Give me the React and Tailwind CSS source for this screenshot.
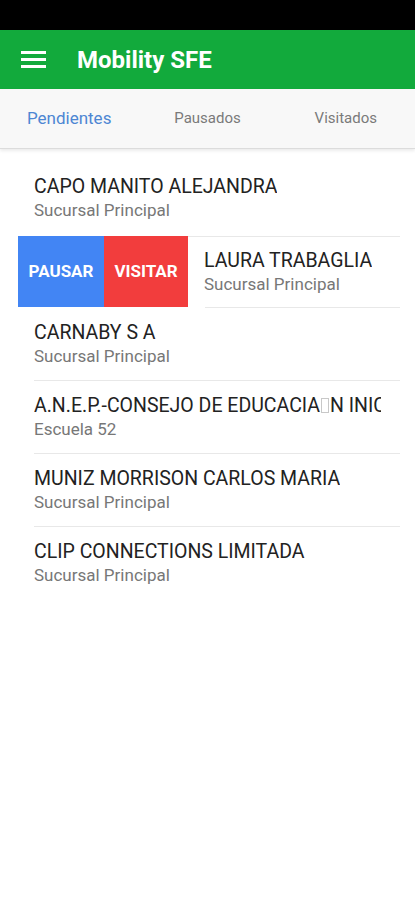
import React from 'react';

const clients = [
  { name: 'CAPO MANITO ALEJANDRA', branch: 'Sucursal Principal' },
  { name: 'LAURA TRABAGLIA', branch: 'Sucursal Principal', swiped: true },
  { name: 'CARNABY S A', branch: 'Sucursal Principal' },
  { name: 'A.N.E.P.-CONSEJO DE EDUCACIA', tail: 'N INICIAL Y PRIMARIA', branch: 'Escuela 52' },
  { name: 'MUNIZ MORRISON CARLOS MARIA', branch: 'Sucursal Principal' },
  { name: 'CLIP CONNECTIONS LIMITADA', branch: 'Sucursal Principal' },
];

const RowText = ({ client }) => (
  <div className="flex flex-col justify-center min-w-0 pr-[19px] pb-[1px]">
    <div className="text-[19.5px] leading-[24px] text-[#222222] whitespace-nowrap overflow-hidden">
      {client.name}
      {client.tail && (
        <>
          <span className="inline-block w-[8px] h-[15px] border border-[#c8c8c8] mx-[1px] align-[-1px]"></span>
          {client.tail}
        </>
      )}
    </div>
    <div className="text-[17px] leading-[22px] text-[#777777] whitespace-nowrap">{client.branch}</div>
  </div>
);

const App = () => {
  const tabs = ['Pendientes', 'Pausados', 'Visitados'];

  return (
    <div className="w-[415px] min-h-[900px] bg-white font-['Roboto',sans-serif]">
      <div className="h-[30px] bg-black"></div>

      <header className="h-[59px] bg-[#12aa3c] flex items-center pl-[21px]">
        <div className="flex flex-col gap-[4.5px] w-[25px]">
          <span className="h-[2.5px] bg-white block"></span>
          <span className="h-[2.5px] bg-white block"></span>
          <span className="h-[2.5px] bg-white block"></span>
        </div>
        <h1 className="ml-[31px] text-white text-[24px] font-bold">Mobility SFE</h1>
      </header>

      <nav className="h-[60px] bg-[#f8f8f8] grid grid-cols-3 items-center border-b border-[#dcdcdc] shadow-[0_2px_3px_rgba(0,0,0,0.08)]">
        {tabs.map((tab, i) => (
          <div
            key={tab}
            className={
              i === 0
                ? 'text-center text-[17px] text-[#4d86d3]'
                : 'text-center text-[15px] text-[#7a7a7a]'
            }
          >
            {tab}
          </div>
        ))}
      </nav>

      <div className="mt-[13px]">
        {clients.map((client, i) => (
          <React.Fragment key={client.name}>
            {client.swiped ? (
              <div className="ml-[18px] mt-[2px] w-[382px] h-[71px] flex overflow-hidden">
                <button className="w-[86px] h-full bg-[#4285f4] text-white text-[17px] font-bold">PAUSAR</button>
                <button className="w-[84px] h-full bg-[#f23d3d] text-white text-[17px] font-bold">VISITAR</button>
                <div className="flex-1 min-w-0 border-t border-[#e8e8e8] pl-[16px] flex">
                  <RowText client={client} />
                </div>
              </div>
            ) : (
              <div className="ml-[34px] w-[366px] h-[72px] flex overflow-hidden">
                <RowText client={client} />
              </div>
            )}
            {i < clients.length - 1 && !clients[i + 1].swiped && (
              <div className={client.swiped ? 'h-px bg-[#e8e8e8] ml-[205px] w-[195px]' : 'h-px bg-[#e8e8e8] ml-[34px] w-[366px]'}></div>
            )}
          </React.Fragment>
        ))}
      </div>
    </div>
  );
};

export default App;
